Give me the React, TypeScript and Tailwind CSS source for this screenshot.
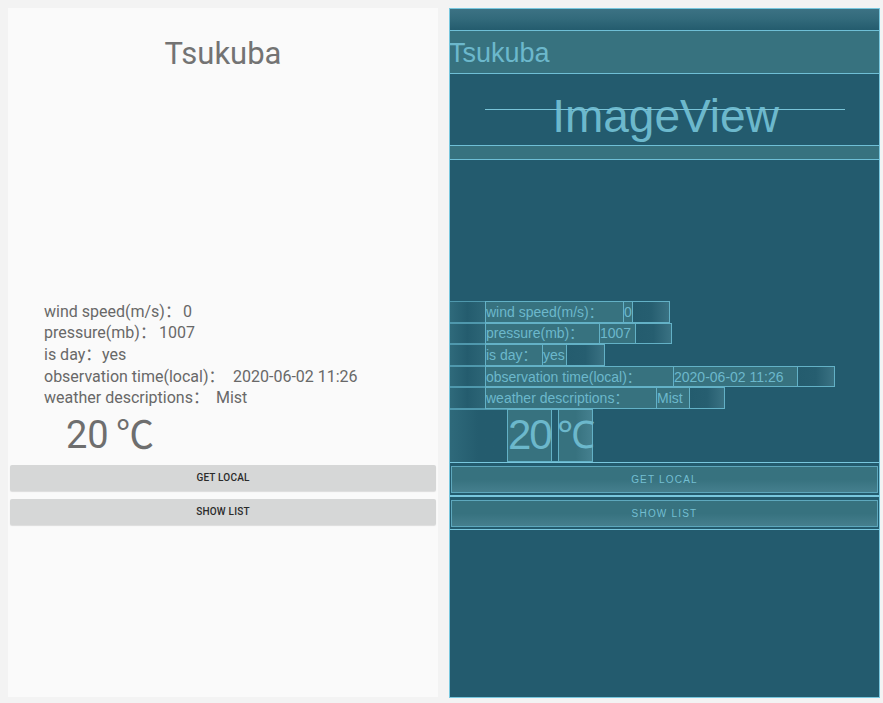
const rows = [
  { label: 'wind speed(m/s)：', value: '0', lw: 139, vw: 9, tw: 37 },
  { label: 'pressure(mb)：', value: '1007', lw: 115, vw: 36, tw: 36 },
  { label: 'is day：', value: 'yes', lw: 58, vw: 24, tw: 38 },
  { label: 'observation time(local)：', value: '2020-06-02 11:26', lw: 189, vw: 124, tw: 37 },
  { label: 'weather descriptions：', value: 'Mist', lw: 172, vw: 33, tw: 35 },
];

const roboto = { fontFamily: 'Roboto, "Noto Sans CJK SC", sans-serif' };
const arial = { fontFamily: '"Liberation Sans", "Noto Sans CJK SC", sans-serif' };

function Design() {
  return (
    <div className="w-[430px] h-[689px] bg-[#fafafa] flex flex-col text-[#686868]" style={roboto}>
      <div className="h-[22px]" />
      <div className="h-[44px] flex items-center justify-center text-[31px] text-[#737373] leading-none pt-[3px]">Tsukuba</div>
      <div className="h-[227px]" />
      <div className="flex flex-col">
        {rows.map((r) => (
          <div key={r.label} className="h-[21.6px] flex items-center text-[16px] leading-none">
            <div className="w-[36px]" />
            <div className="whitespace-nowrap" style={{ width: r.lw }}>{r.label}</div>
            <div className="whitespace-nowrap">{r.value}</div>
          </div>
        ))}
      </div>
      <div className="h-[53px] flex items-center text-[38px] leading-none text-[#6e6e6e]">
        <div className="w-[58px]" />
        <div className="w-[50px]">20</div>
        <div className="tracking-[-2px]">℃</div>
      </div>
      <div className="flex flex-col gap-[8px] px-[2px] pt-[3px]">
        {['GET LOCAL', 'SHOW LIST'].map((b) => (
          <button
            key={b}
            className="h-[26px] w-full rounded-[2px] bg-[#d6d7d7] shadow-[0_1px_1px_rgba(0,0,0,0.12)] text-[10px] font-medium text-[#2a2a2a] tracking-[0.2px]"
          >
            {b}
          </button>
        ))}
      </div>
    </div>
  );
}

function Blueprint() {
  return (
    <div
      className="w-[431px] h-[690px] bg-[#235b6e] flex flex-col outline outline-1 -outline-offset-1 outline-[#78c7de] text-[#6cb8cc]"
      style={arial}
    >
      <div className="h-[22px] bg-gradient-to-b from-[#3d7385] via-[#326a7b] to-[#245c6e]" />
      <div className="h-[44px] bg-[#37727f] border-y border-[#6fbfd6] flex items-center text-[27px] leading-none pt-[2px]">
        Tsukuba
      </div>
      <div className="relative h-[71px] flex items-center justify-center text-[46px] leading-none pt-[12px] pl-[2px]">
        ImageView
        <div className="absolute left-[36px] right-[35px] top-[35px] h-px bg-[#79c4d8]" />
      </div>
      <div className="h-[15px] bg-[#37727f] border-y border-[#6fbfd6]" />
      <div className="h-[141px]" />
      <div className="flex flex-col">
        {rows.map((r) => (
          <div key={r.label} className="h-[21.6px] flex text-[14px] leading-none">
            <div className="w-[36px] border border-r-0 border-[#4f98ad] bg-gradient-to-r from-[#2f6a7b] via-[#245c6e] to-[#2d6677]" />
            <div
              className="border border-[#63b1c6] bg-[#37727f] whitespace-nowrap flex items-center overflow-hidden"
              style={{ width: r.lw }}
            >
              {r.label}
            </div>
            <div
              className="border border-l-0 border-[#63b1c6] bg-[#37727f] whitespace-nowrap flex items-center overflow-hidden"
              style={{ width: r.vw }}
            >
              {r.value}
            </div>
            <div
              className="border border-l-0 border-[#63b1c6] bg-gradient-to-r from-[#245c6e] via-[#265e70] to-[#3a7283]"
              style={{ width: r.tw }}
            />
          </div>
        ))}
      </div>
      <div className="h-[53px] flex">
        <div className="w-[58px] border-t border-[#4f98ad] bg-gradient-to-r from-[#2f6a7b] via-[#245c6e] to-[#245c6e]" />
        <div className="w-[45px] border border-[#63b1c6] bg-[#37727f] flex items-center text-[42px] leading-none tracking-[-2px]">
          20
        </div>
        <div className="w-[6px] border-y border-[#63b1c6]" />
        <div
          className="w-[35px] border border-[#63b1c6] bg-gradient-to-r from-[#37727f] via-[#37727f] to-[#45808f] flex items-center justify-center text-[38px] leading-none"
          style={{ fontFamily: '"Liberation Serif", serif' }}
        >
          ℃
        </div>
      </div>
      <div className="flex flex-col">
        {['GET LOCAL', 'SHOW LIST'].map((b) => (
          <div key={b} className="h-[34px] border border-[#78c7de] px-[1px] pt-[3px] pb-[2px]">
            <div className="h-full border border-[#5ea8bd] bg-gradient-to-b from-[#37727f] via-[#37727f] to-[#457f8e] flex items-center justify-center text-[10px] tracking-[1.2px] text-[#74bfd2]">
              {b}
            </div>
          </div>
        ))}
      </div>
    </div>
  );
}

export default function App() {
  return (
    <div className="w-[883px] h-[703px] bg-[#f3f3f3] flex pl-[8px] pt-[8px] gap-[11px] overflow-hidden">
      <Design />
      <Blueprint />
    </div>
  );
}
